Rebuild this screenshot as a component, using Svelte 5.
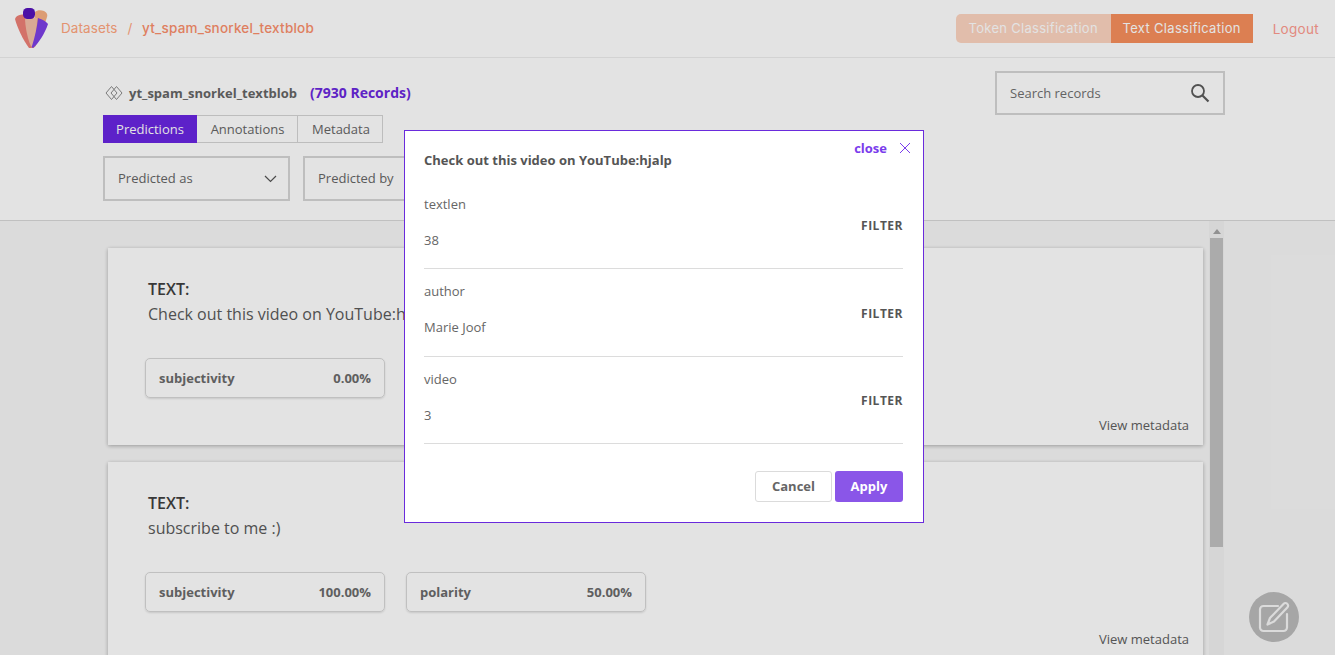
<script>
  const filters = [
    { label: 'textlen', value: '38' },
    { label: 'author', value: 'Marie Joof' },
    { label: 'video', value: '3' }
  ];

  const records = [
    {
      text: 'Check out this video on YouTube:hjalp',
      scores: [{ name: 'subjectivity', value: '0.00%' }]
    },
    {
      text: 'subscribe to me :)',
      scores: [
        { name: 'subjectivity', value: '100.00%' },
        { name: 'polarity', value: '50.00%' }
      ]
    }
  ];
</script>

<div class="page">
  <header class="topbar">
    <svg class="logo" width="36" height="40" viewBox="0 2 36 40">
      <path d="M2 11c2-2 6-3 9-2 3 6 7 22 9 33-2 1-4 1-5 0C9 34 3 21 1 13z" fill="#ee8076" />
      <path d="M21 6c2-2 6-2 9-1 2 1 4 3 3 6-3 9-8 24-12 30l-2 1z" fill="#f8b184" />
      <path d="M11 12c3-1 9-1 12 0 0 10-2 23-5 30-4-6-7-22-7-30z" fill="#f4bfa8" />
      <path d="M24 12c3 1 8 3 10 6-3 9-9 19-15 24-1-1-2-1-1-2 3-9 5-19 6-28z" fill="#7d3fe6" />
      <rect x="9" y="2" width="12" height="11" rx="4.5" fill="#5512bb" />
    </svg>
    <nav class="crumbs">
      <span class="crumb">Datasets</span>
      <span class="sep">/</span>
      <span class="crumb current">yt_spam_snorkel_textblob</span>
    </nav>
    <div class="switch">
      <button class="switch-btn">Token Classification</button>
      <button class="switch-btn on">Text Classification</button>
    </div>
    <span class="logout">Logout</span>
  </header>

  <section class="subbar">
    <div class="subbar-inner">
      <div class="subbar-left">
        <div class="title">
          <svg width="18" height="16" viewBox="0 0 18 16" fill="none" stroke="#8a8a8a" stroke-width="1">
            <path d="M6.5 1.5 12 8l-5.500 6.500L1 8z" />
            <path d="M11.500 1.500 17 8l-5.500 6.500L6 8z" />
          </svg>
          <strong>yt_spam_snorkel_textblob</strong>
          <span class="count">(7930 Records)</span>
        </div>
        <div class="tabs">
          <button class="tab active">Predictions</button>
          <button class="tab">Annotations</button>
          <button class="tab">Metadata</button>
        </div>
        <div class="selects">
          <div class="select">
            <span>Predicted as</span>
            <svg width="13" height="8" viewBox="0 0 13 8" fill="none" stroke="#555" stroke-width="1.200">
              <path d="M1 1l5.500 5.500L12 1" />
            </svg>
          </div>
          <div class="select">
            <span>Predicted by</span>
          </div>
        </div>
      </div>
      <div class="search">
        <span>Search records</span>
        <svg width="20" height="20" viewBox="0 0 20 20" fill="none" stroke="#5c5c5c" stroke-width="1.800">
          <circle cx="8" cy="8" r="6" />
          <path d="M12.500 12.500 18.500 18.500" stroke-width="2.200" />
        </svg>
      </div>
    </div>
  </section>

  <main class="content">
    <div class="list">
      {#each records as record}
        <article class="card">
          <h3>TEXT:</h3>
          <p>{record.text}</p>
          <div class="scores">
            {#each record.scores as score}
              <div class="score">
                <span>{score.name}</span>
                <span>{score.value}</span>
              </div>
            {/each}
          </div>
          <span class="view-meta">View metadata</span>
        </article>
      {/each}
    </div>
    <div class="scrollbar">
      <span class="arrow"></span>
      <span class="thumb"></span>
    </div>
  </main>

  <button class="fab" aria-label="Edit">
    <svg width="34" height="34" viewBox="0 0 34 34" fill="none" stroke="#f6f6f6" stroke-width="2.200" stroke-linejoin="round" stroke-linecap="round">
      <path d="M21 6H6.500A3.500 3.500 0 0 0 3 9.500v18A3.500 3.500 0 0 0 6.500 31h20a3.500 3.500 0 0 0 3.500-3.500V14" />
      <path d="M26.500 4c1.200-1.300 2.600-1.300 3.700-.2 1.200 1.100 1.200 2.500.1 3.700L17 21.500l-6.500 3 2.500-6.500z" />
    </svg>
  </button>

  <div class="backdrop"></div>

  <div class="modal">
    <button class="close">
      <span>close</span>
      <svg width="12" height="12" viewBox="0 0 12 12" fill="none" stroke="#7a3cec" stroke-width="1">
        <path d="M1 1l10 10M11 1 1 11" />
      </svg>
    </button>
    <h4>Check out this video on YouTube:hjalp</h4>
    {#each filters as filter}
      <div class="meta-row">
        <div class="meta-text">
          <span>{filter.label}</span>
          <span>{filter.value}</span>
        </div>
        <span class="filter">FILTER</span>
      </div>
    {/each}
    <div class="actions">
      <button class="btn cancel">Cancel</button>
      <button class="btn apply">Apply</button>
    </div>
  </div>
</div>

<style>
  :global(body) {
    margin: 0;
    font-family: "Open Sans", sans-serif;
    color: #4a4a4a;
  }

  button {
    font-family: inherit;
    border: none;
    background: none;
    padding: 0;
  }

  .page {
    position: relative;
    height: 655px;
    overflow: hidden;
    background: #fff;
  }

  .backdrop {
    position: absolute;
    inset: 0;
    background: rgba(0, 0, 0, 0.11);
  }

  .topbar {
    height: 57px;
    display: flex;
    align-items: center;
    padding: 0 16px 0 14px;
    border-bottom: 1px solid #eee;
    box-sizing: content-box;
    font-family: Inter, sans-serif;
  }

  .logo {
    margin-right: 11px;
    margin-top: -1px;
  }

  .crumbs {
    flex: 1;
    display: flex;
    align-items: center;
    margin-top: -1px;
    font-size: 13.500px;
    letter-spacing: 0.1px;
    color: #ffa67e;
  }

  .crumb.current {
    color: #fb8f6c;
    font-weight: 500;
    letter-spacing: 0.2px;
  }

  .sep {
    margin: 0 9.500px 0 10px;
  }

  .switch {
    display: flex;
    margin-top: -1px;
  }

  .switch-btn {
    height: 29px;
    width: 155px;
    font-size: 13px;
    letter-spacing: 0.3px;
    font-family: Inter, sans-serif;
    background: #fdd3be;
    color: #fff;
    opacity: 0.95;
    border-radius: 5px 0 0 5px;
  }

  .switch-btn.on {
    width: 142px;
    background: #f88f5d;
    border-radius: 0;
    opacity: 1;
  }

  .logout {
    margin-left: 20px;
    font-size: 13.500px;
    letter-spacing: 0.3px;
    color: #fe9b8f;
  }

  .subbar {
    height: 162px;
    border-bottom: 1px solid #d8d8d8;
  }

  .subbar-inner {
    margin: 0 110px 0 103px;
    display: flex;
    justify-content: space-between;
    padding-top: 13px;
  }

  .title {
    display: flex;
    align-items: center;
    height: 18px;
    margin-top: 13px;
    padding-left: 2px;
    font-size: 13px;
  }

  .title strong {
    margin-left: 6px;
    color: #666;
  }

  .count {
    margin-left: 13px;
    margin-top: -1px;
    font-size: 14px;
    font-weight: 700;
    color: #6a28de;
  }

  .tabs {
    display: flex;
    margin-top: 13px;
  }

  .tab {
    height: 28px;
    padding: 0 12px 0 14px;
    border: 1px solid #d5d5d5;
    border-left: none;
    font-size: 13px;
    color: #666;
  }

  .tab.active {
    width: 94px;
    padding: 0 0 0 1px;
    background: #6926e2;
    border-color: #6926e2;
    color: #fff;
  }

  .tab:nth-child(2) {
    width: 101px;
    padding: 0 0 0 1px;
  }

  .selects {
    display: flex;
    gap: 13px;
    margin-top: 13px;
  }

  .select {
    width: 187px;
    height: 45px;
    box-sizing: border-box;
    border: 2px solid #d6d6d6;
    display: flex;
    align-items: center;
    justify-content: space-between;
    padding: 0 11px 2px 13px;
    font-size: 13px;
    color: #666;
  }

  .select svg {
    margin-top: 3px;
  }

  .search {
    width: 230px;
    height: 44px;
    box-sizing: border-box;
    border: 2px solid #d6d6d6;
    display: flex;
    align-items: center;
    justify-content: space-between;
    padding: 0 13px 0 13px;
    font-size: 13px;
    color: #707070;
  }

  .content {
    display: flex;
    align-items: flex-start;
    height: 434px;
    background: #f7f7f7;
    padding-left: 108px;
  }

  .list {
    width: 1095px;
    padding-top: 27px;
    display: flex;
    flex-direction: column;
    gap: 17px;
  }

  .card {
    position: relative;
    height: 197px;
    box-sizing: border-box;
    background: #fff;
    padding: 30px 40px 0;
    flex-shrink: 0;
    box-shadow: 0 1px 4px rgba(0, 0, 0, 0.3);
  }

  .card h3 {
    margin: 0;
    font-size: 16px;
    line-height: 22px;
    font-weight: 600;
    color: #3f3f3f;
  }

  .card p {
    margin: 3px 0 0;
    font-size: 16px;
    line-height: 22px;
    color: #5a5a5a;
  }

  .scores {
    display: flex;
    gap: 21px;
    margin: 33px 0 0 -3px;
  }

  .score {
    width: 240px;
    height: 40px;
    box-sizing: border-box;
    display: flex;
    align-items: center;
    justify-content: space-between;
    padding: 0 13px;
    border: 1px solid #d8d8d8;
    border-radius: 5px;
    box-shadow: 0 1px 2px rgba(0, 0, 0, 0.12);
    font-size: 13px;
    font-weight: 700;
    color: #6b6b6b;
  }

  .view-meta {
    position: absolute;
    right: 14px;
    bottom: 11px;
    font-size: 13px;
    color: #606060;
  }

  .scrollbar {
    width: 15px;
    height: 434px;
    margin-left: 6px;
    background: #f1f1f1;
    display: flex;
    flex-direction: column;
    align-items: center;
    flex-shrink: 0;
  }

  .arrow {
    margin-top: 8px;
    border-left: 4px solid transparent;
    border-right: 4px solid transparent;
    border-bottom: 5px solid #a3a3a3;
  }

  .thumb {
    margin-top: 4px;
    width: 13px;
    height: 309px;
    background: #c1c1c1;
  }

  .fab {
    position: absolute;
    left: 1249px;
    top: 592px;
    width: 50px;
    height: 50px;
    border-radius: 50%;
    background: #bbb;
    display: flex;
    align-items: center;
    justify-content: center;
  }

  .modal {
    position: absolute;
    left: 404px;
    top: 130px;
    width: 520px;
    height: 393px;
    box-sizing: border-box;
    background: #fff;
    border: 1px solid #6a2bdc;
    padding: 20px 20px 0 19px;
  }

  .close {
    position: absolute;
    top: 8px;
    right: 12px;
    display: flex;
    align-items: center;
    gap: 12px;
    font-size: 13px;
    font-weight: 700;
    color: #7a3cec;
  }

  .modal h4 {
    margin: 0 0 12.500px;
    font-size: 13px;
    line-height: 18px;
    font-weight: 700;
    color: #555;
  }

  .meta-row {
    height: 87.500px;
    box-sizing: border-box;
    display: flex;
    align-items: center;
    justify-content: space-between;
    border-bottom: 1px solid #dcdcdc;
  }

  .meta-text {
    display: flex;
    flex-direction: column;
    gap: 18px;
    font-size: 13px;
    line-height: 18px;
    color: #666;
    padding-bottom: 6px;
  }

  .filter {
    font-size: 12px;
    font-weight: 700;
    letter-spacing: 0.5px;
    color: #555;
    padding-top: 2px;
  }

  .actions {
    display: flex;
    justify-content: flex-end;
    gap: 3px;
    margin-top: 26.500px;
  }

  .btn {
    height: 31px;
    border-radius: 3px;
    font-size: 13px;
    font-weight: 700;
  }

  .cancel {
    width: 77px;
    border: 1px solid #dbdbdb;
    color: #666;
    background: #fff;
  }

  .apply {
    width: 68px;
    background: #8a56e8;
    color: #fff;
  }
</style>
